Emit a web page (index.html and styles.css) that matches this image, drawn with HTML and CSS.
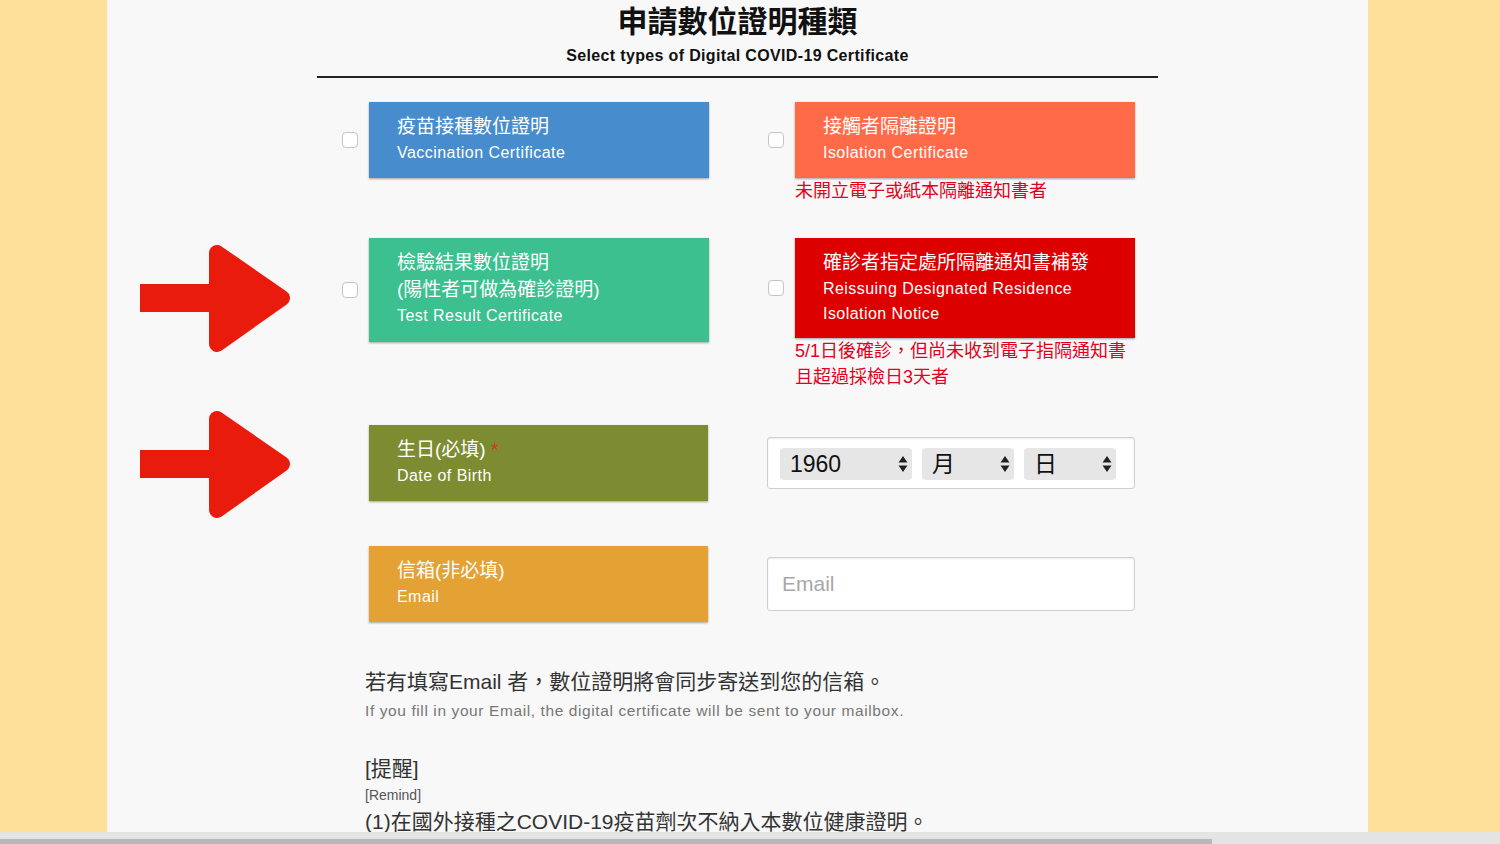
FILE: index.html
```html
<!DOCTYPE html>
<html lang="zh-Hant">
<head>
  <meta charset="UTF-8">
  <title>申請數位證明種類</title>
  <link rel="stylesheet" href="styles.css">
</head>
<body>
  <div class="sheet">
    <!-- 標題 -->
    <div class="head">
      <h1>申請數位證明種類</h1>
      <p class="sub">Select types of Digital COVID-19 Certificate</p>
    </div>

    <div class="form">
      <!-- 第1列 -->
      <div class="row">
        <div class="cell">
          <label class="opt">
            <input type="checkbox" class="chk">
            <span class="tag blue">
              <span class="zh">疫苗接種數位證明</span>
              <span class="en">Vaccination Certificate</span>
            </span>
          </label>
        </div>
        <div class="cell">
          <label class="opt">
            <input type="checkbox" class="chk">
            <span class="tag tomato">
              <span class="zh">接觸者隔離證明</span>
              <span class="en">Isolation Certificate</span>
            </span>
          </label>
          <p class="note">未開立電子或紙本隔離通知書者</p>
        </div>
      </div>

      <!-- 第2列 -->
      <div class="row second">
        <div class="cell">
          <label class="opt">
            <input type="checkbox" class="chk">
            <span class="tag green tall">
              <span class="zh">檢驗結果數位證明</span>
              <span class="zh">(陽性者可做為確診證明)</span>
              <span class="en">Test Result Certificate</span>
            </span>
          </label>
        </div>
        <div class="cell">
          <label class="opt">
            <input type="checkbox" class="chk">
            <span class="tag red">
              <span class="zh">確診者指定處所隔離通知書補發</span>
              <span class="en">Reissuing Designated Residence</span>
              <span class="en">Isolation Notice</span>
            </span>
          </label>
          <p class="note">5/1日後確診，但尚未收到電子指隔通知書<br>且超過採檢日3天者</p>
        </div>
      </div>

      <!-- 生日 -->
      <div class="row mid">
        <div class="cell plain">
          <span class="tag olive">
            <span class="zh">生日(必填) <em>*</em></span>
            <span class="en">Date of Birth</span>
          </span>
        </div>
        <div class="cell">
          <div class="dob">
            <div class="pick wide">
              <select><option>1960</option></select>
              <svg class="updown" width="10" height="18" viewBox="0 0 10 18"><path d="M5 1 L9.5 7.5 H0.5 Z M5 17 L9.5 10.5 H0.5 Z" fill="#222"/></svg>
            </div>
            <div class="pick">
              <select><option>月</option></select>
              <svg class="updown" width="10" height="18" viewBox="0 0 10 18"><path d="M5 1 L9.5 7.5 H0.5 Z M5 17 L9.5 10.5 H0.5 Z" fill="#222"/></svg>
            </div>
            <div class="pick">
              <select><option>日</option></select>
              <svg class="updown" width="10" height="18" viewBox="0 0 10 18"><path d="M5 1 L9.5 7.5 H0.5 Z M5 17 L9.5 10.5 H0.5 Z" fill="#222"/></svg>
            </div>
          </div>
        </div>
      </div>

      <!-- 信箱 -->
      <div class="row mid">
        <div class="cell plain">
          <span class="tag orange">
            <span class="zh">信箱(非必填)</span>
            <span class="en">Email</span>
          </span>
        </div>
        <div class="cell">
          <input type="text" class="mail" placeholder="Email">
        </div>
      </div>

      <!-- 說明 -->
      <div class="info">
        <p class="big">若有填寫Email 者，數位證明將會同步寄送到您的信箱。</p>
        <p class="small">If you fill in your Email, the digital certificate will be sent to your mailbox.</p>
        <p class="big remind">[提醒]</p>
        <p class="tiny">[Remind]</p>
        <p class="big">(1)在國外接種之COVID-19疫苗劑次不納入本數位健康證明。</p>
      </div>
    </div>

    <!-- 紅色箭頭 -->
    <svg class="arrow a1" width="152" height="110" viewBox="0 0 152 110">
      <rect x="0" y="40" width="80" height="28" fill="#e91b0d"/>
      <polygon points="77,9 142,54 77,100" fill="#e91b0d" stroke="#e91b0d" stroke-width="16" stroke-linejoin="round"/>
    </svg>
    <svg class="arrow a2" width="152" height="110" viewBox="0 0 152 110">
      <rect x="0" y="40" width="80" height="28" fill="#e91b0d"/>
      <polygon points="77,9 142,54 77,100" fill="#e91b0d" stroke="#e91b0d" stroke-width="16" stroke-linejoin="round"/>
    </svg>
  </div>

  <!-- 捲軸 -->
  <div class="hbar"><div class="thumb"></div></div>
</body>
</html>
```

FILE: styles.css
```css
body {
  margin: 0;
  padding: 0;
  background: #ffe09b;
  font-family: "Liberation Sans", "Noto Sans CJK TC", sans-serif;
  color: #222;
}

.sheet {
  position: relative;
  margin-left: 107px;
  width: 1261px;
  min-height: 844px;
  background: #f8f8f8;
  padding-top: 4px;
  box-sizing: border-box;
}

.head {
  text-align: center;
}

.head h1 {
  margin: 0;
  font-size: 30px;
  line-height: 36px;
  font-weight: bold;
  color: #111;
}

.head .sub {
  margin: 6px 0 0;
  font-size: 16px;
  line-height: 20px;
  letter-spacing: 0.35px;
  font-weight: bold;
  color: #111;
}

.form {
  width: 841px;
  margin: 10px auto 0;
  border-top: 2px solid #222;
  padding-top: 24px;
}

.row {
  display: grid;
  grid-template-columns: 367px 368px;
  column-gap: 59px;
  padding-left: 25px;
  margin-bottom: 34px;
  align-items: start;
}

.row.second {
  margin-bottom: 35px;
}

.row.mid {
  align-items: center;
  margin-bottom: 45px;
}

.cell.plain {
  padding-left: 27px;
}

.opt {
  display: flex;
  align-items: center;
  gap: 11px;
}

.chk {
  appearance: none;
  -webkit-appearance: none;
  margin: 0;
  width: 16px;
  height: 16px;
  border: 1px solid #c4c4c4;
  border-radius: 4px;
  background: #fff;
  box-sizing: border-box;
  flex: none;
}

.tag {
  display: flex;
  flex-direction: column;
  justify-content: center;
  box-sizing: border-box;
  width: 340px;
  min-height: 76px;
  padding: 12px 28px;
  color: #fff;
  box-shadow: 0 1px 2px rgba(0, 0, 0, 0.35);
}

.plain .tag {
  width: 339px;
}

.tag .zh {
  font-size: 19px;
  line-height: 26px;
}

.tag .en {
  font-size: 16px;
  letter-spacing: 0.45px;
  line-height: 26px;
}

.tag em {
  font-style: normal;
  color: #e0301e;
}

.tag.tall .zh,
.tag.tall .en {
  line-height: 26.5px;
}

.red .en {
  line-height: 25px;
}

.blue { background: #478dce; }
.tomato { background: #ff6a48; }
.green { background: #3cc08f; }
.red { background: #dd0000; }
.olive { background: #7d8c31; }
.orange { background: #e4a134; }

.note {
  margin: 0 0 0 27px;
  font-size: 18px;
  line-height: 26px;
  color: #e4001d;
}

.dob {
  display: flex;
  gap: 10px;
  width: 368px;
  height: 52px;
  margin-left: -1px;
  box-sizing: border-box;
  padding: 10px 12px;
  background: #fff;
  border: 1px solid #cfcfcf;
  border-radius: 3px;
  box-shadow: inset 0 1px 2px rgba(0, 0, 0, 0.08);
}

.pick {
  position: relative;
  width: 92px;
}

.pick.wide {
  width: 132px;
}

.pick select {
  appearance: none;
  -webkit-appearance: none;
  width: 100%;
  height: 32px;
  border: none;
  border-radius: 4px;
  background: #e6e6e6;
  padding: 0 10px;
  font-family: "Liberation Sans", "Noto Sans CJK TC", sans-serif;
  font-size: 23px;
  color: #111;
}

.pick .updown {
  position: absolute;
  right: 4px;
  top: 7px;
  pointer-events: none;
}

.mail {
  display: block;
  width: 368px;
  height: 54px;
  margin-left: -1px;
  box-sizing: border-box;
  padding: 0 14px;
  background: #fff;
  border: 1px solid #cfcfcf;
  border-radius: 3px;
  box-shadow: inset 0 1px 2px rgba(0, 0, 0, 0.08);
  font-family: "Liberation Sans", "Noto Sans CJK TC", sans-serif;
  font-size: 21px;
}

.mail::placeholder {
  color: #a8a8a8;
}

.info {
  padding-left: 48px;
}

.info p {
  margin: 0;
}

.info .big {
  font-size: 21px;
  line-height: 30px;
  color: #333;
}

.info .small {
  margin-top: 4px;
  font-size: 15.5px;
  letter-spacing: 0.6px;
  line-height: 20px;
  color: #777;
}

.info .remind {
  margin-top: 33px;
}

.info .tiny {
  margin-top: 2px;
  font-size: 14px;
  line-height: 18px;
  color: #555;
}

.info .tiny + .big {
  margin-top: 3px;
}

.arrow {
  position: absolute;
  left: 33px;
}

.a1 { top: 244px; }
.a2 { top: 410px; }

.hbar {
  position: fixed;
  left: 0;
  bottom: 0;
  width: 100%;
  height: 12px;
  background: #e4e4e4;
}

.hbar .thumb {
  position: absolute;
  left: 0;
  bottom: 0;
  width: 1212px;
  height: 5px;
  background: #b8b8b8;
}
```
